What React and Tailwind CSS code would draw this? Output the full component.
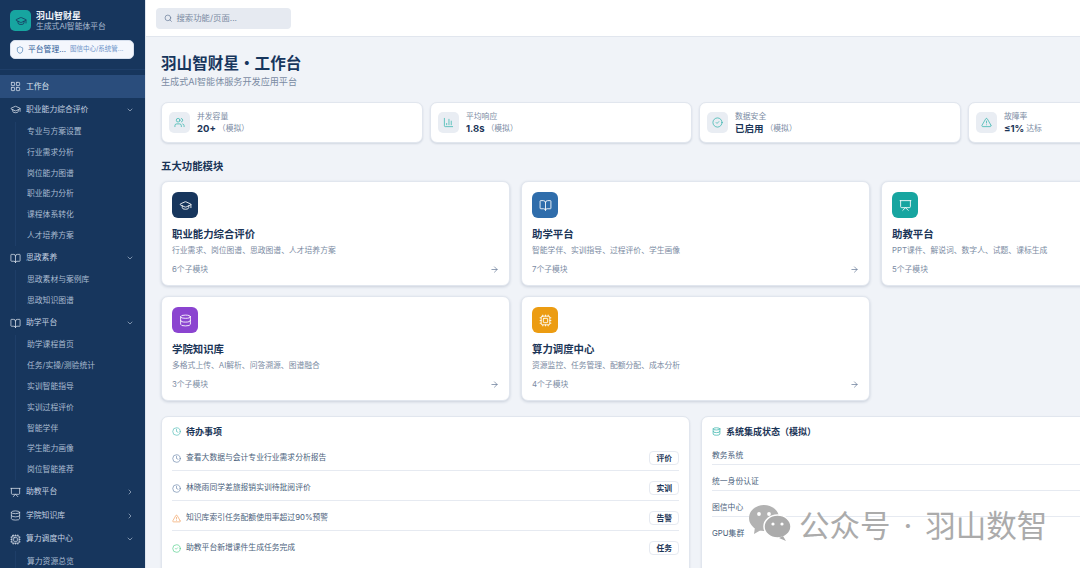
import React from 'react';
import {
  AlertTriangle, ArrowRight, BookOpen, ChevronDown, ChevronRight, CircleCheck, Clock, Cpu, Database,
  GraduationCap, LayoutGrid, Presentation, Search, Shield, Users, ChartColumn,
} from 'lucide-react';

const nav = [
  { label: '职业能力综合评价', icon: GraduationCap, open: true, items: ['专业与方案设置', '行业需求分析', '岗位能力图谱', '职业能力分析', '课程体系转化', '人才培养方案'] },
  { label: '思政素养', icon: BookOpen, open: true, items: ['思政素材与案例库', '思政知识图谱'] },
  { label: '助学平台', icon: BookOpen, open: true, items: ['助学课程首页', '任务/实操/测验统计', '实训智能指导', '实训过程评价', '智能学伴', '学生能力画像', '岗位智能推荐'] },
  { label: '助教平台', icon: Presentation },
  { label: '学院知识库', icon: Database },
  { label: '算力调度中心', icon: Cpu, open: true, items: ['算力资源总览'] },
];

const stats = [
  { label: '并发容量', value: '20+', note: '（模拟）', icon: Users },
  { label: '平均响应', value: '1.8s', note: '（模拟）', icon: ChartColumn },
  { label: '数据安全', value: '已启用', note: '（模拟）', icon: CircleCheck },
  { label: '故障率', value: '≤1%', note: '达标', icon: AlertTriangle },
];

const modules = [
  { title: '职业能力综合评价', desc: '行业需求、岗位图谱、思政图谱、人才培养方案', count: '6个子模块', icon: GraduationCap, color: 'bg-[#17365d]' },
  { title: '助学平台', desc: '智能学伴、实训指导、过程评价、学生画像', count: '7个子模块', icon: BookOpen, color: 'bg-[#2f6dab]' },
  { title: '助教平台', desc: 'PPT课件、解说词、数字人、试题、课标生成', count: '5个子模块', icon: Presentation, color: 'bg-[#17a5a0]' },
  { title: '学院知识库', desc: '多格式上传、AI解析、问答溯源、图谱融合', count: '3个子模块', icon: Database, color: 'bg-[#8b44d0]' },
  { title: '算力调度中心', desc: '资源监控、任务管理、配额分配、成本分析', count: '4个子模块', icon: Cpu, color: 'bg-[#ec9c12]' },
];

const todos = [
  { text: '查看大数据与会计专业行业需求分析报告', tag: '评价', icon: Clock, color: 'text-[#5d7aa3]' },
  { text: '林晓雨同学差旅报销实训待批阅评价', tag: '实训', icon: Clock, color: 'text-[#5d7aa3]' },
  { text: '知识库索引任务配额使用率超过90%预警', tag: '告警', icon: AlertTriangle, color: 'text-[#f0934a]' },
  { text: '助教平台新增课件生成任务完成', tag: '任务', icon: CircleCheck, color: 'text-[#3fc97f]' },
];

const systems = ['教务系统', '统一身份认证', '图信中心', 'GPU集群'];

function WeChatMark() {
  return (
    <svg width="42" height="36" viewBox="0 0 42 36" className="shrink-0">
      <ellipse cx="15" cy="13" rx="15" ry="13" fill="#b2b2b2" />
      <path d="M6 22 L5 29 L12 25 Z" fill="#b2b2b2" />
      <ellipse cx="28.5" cy="21.5" rx="13.5" ry="11.5" fill="#ababab" stroke="#fff" strokeWidth="1.5" />
      <path d="M34 31 L37 36 L30 33 Z" fill="#ababab" />
      <circle cx="10" cy="9" r="1.9" fill="#fff" />
      <circle cx="20" cy="9" r="1.9" fill="#fff" />
      <circle cx="24" cy="19" r="1.6" fill="#fff" />
      <circle cx="33" cy="19" r="1.6" fill="#fff" />
    </svg>
  );
}

function NavGroup({ group }) {
  const Icon = group.icon;
  const Chevron = group.open ? ChevronDown : ChevronRight;
  return (
    <div>
      <div className="flex h-[23.5px] items-center pl-[10px] pr-[11px] text-[#c3d0e0]">
        <Icon size={11} strokeWidth={1.6} className="shrink-0 text-[#dfe7f0]" />
        <span className="ml-[5px] flex-1 text-[7.8px]">{group.label}</span>
        <Chevron size={8} strokeWidth={1.8} />
      </div>
      {group.open && (
        <div className="ml-[15px] border-l border-[#1e3e68]">
          {group.items.map(item => (
            <div key={item} className="flex h-[20.8px] items-center pl-[11px] text-[7.8px] text-[#a9bbd0]">{item}</div>
          ))}
        </div>
      )}
    </div>
  );
}

function StatCard({ stat }) {
  const Icon = stat.icon;
  return (
    <div className="flex h-[41px] w-[261.5px] shrink-0 items-center gap-[7px] rounded-[7px] border border-[#e1e6ee] bg-white pl-[7px] shadow-[0_1px_2px_rgba(30,50,90,0.14)]">
      <div className="flex h-[21px] w-[21px] items-center justify-center rounded-[5px] bg-[#e9edf3]">
        <Icon size={11} strokeWidth={1.5} className="text-[#26b0a8]" />
      </div>
      <div>
        <div className="text-[7.8px] leading-[12px] text-[#7b8ba3]">{stat.label}</div>
        <div className="flex items-center text-[7.8px] leading-[13px] text-[#7b8ba3]">
          <span className="mr-[2px] text-[9.5px] font-bold text-[#1b3557]">{stat.value}</span>
          {stat.note}
        </div>
      </div>
    </div>
  );
}

function ModuleCard({ mod }) {
  const Icon = mod.icon;
  return (
    <div className="flex h-[105px] flex-col rounded-[7px] border border-[#e1e6ee] bg-white px-[10px] pt-[10px] shadow-[0_1px_3px_rgba(30,50,90,0.18)]">
      <div className={`flex h-[26px] w-[26px] items-center justify-center rounded-[6px] ${mod.color}`}>
        <Icon size={13} strokeWidth={1.6} className="text-white" />
      </div>
      <div className="mt-[9px] text-[10.4px] font-bold leading-[15px] text-[#1b3557]">{mod.title}</div>
      <div className="mt-[2px] text-[7.8px] leading-[12px] text-[#7b8ba3]">{mod.desc}</div>
      <div className="mt-[7px] flex items-center justify-between text-[7.8px] leading-[12px] text-[#7b8ba3]">
        <span>{mod.count}</span>
        <ArrowRight size={9} strokeWidth={1.8} className="text-[#5d7291]" />
      </div>
    </div>
  );
}

export default function App() {
  return (
    <div className="relative flex h-[568px] w-[1080px] overflow-hidden bg-[#f0f3f8] font-['Inter','Noto_Sans_CJK_SC',sans-serif]">
      <aside className="w-[146px] shrink-0 overflow-hidden border-r border-[#dfe5ed] bg-[#17365d]">
        <div className="border-b border-[#1e3e68] pb-[10px] pl-[10px] pr-[11px] pt-[10px]">
          <div className="flex items-center gap-[5px]">
            <div className="flex h-[21px] w-[21px] items-center justify-center rounded-[5px] bg-[#17a5a0]">
              <GraduationCap size={12} strokeWidth={1.6} className="text-[#17365d]" />
            </div>
            <div>
              <div className="text-[9px] font-bold leading-[11px] text-[#eef3f8]">羽山智财星</div>
              <div className="text-[7.8px] leading-[10px] text-[#a9bbd0]">生成式AI智能体平台</div>
            </div>
          </div>
          <div className="mt-[9px] flex h-[19px] items-center rounded-[5px] border border-[#d7e0ee] bg-[#f4f7fd] pl-[5px]">
            <Shield size={8} strokeWidth={1.8} className="shrink-0 text-[#2f6dab]" />
            <span className="ml-[4px] whitespace-nowrap text-[7.8px] text-[#2a5a96]">平台管理...</span>
            <span className="ml-[4px] whitespace-nowrap text-[6.5px] text-[#6d93c9]">图信中心/系统管...</span>
          </div>
        </div>
        <div className="mt-[5px] flex h-[23px] items-center bg-[#2a4d7c] pl-[10px] text-[#dfe7f0]">
          <LayoutGrid size={11} strokeWidth={1.6} />
          <span className="ml-[5px] text-[7.8px]">工作台</span>
        </div>
        {nav.map(group => <NavGroup key={group.label} group={group} />)}
      </aside>

      <div className="flex min-w-0 flex-1 flex-col">
        <header className="flex h-[37px] shrink-0 items-center border-b border-[#e1e6ee] bg-white pl-[10px]">
          <div className="flex h-[21px] w-[135px] items-center rounded-[4px] bg-[#e6eaf1] pl-[8px] text-[#7b8ba3]">
            <Search size={8.5} strokeWidth={1.8} className="text-[#5d7291]" />
            <span className="ml-[4px] text-[8.4px]">搜索功能/页面...</span>
          </div>
        </header>

        <main className="flex-1 overflow-hidden pl-[15px] pt-[16px]">
          <h1 className="text-[15.6px] font-bold leading-[22px] text-[#17365d]">羽山智财星・工作台</h1>
          <p className="text-[9.1px] leading-[13px] text-[#7b8ba3]">生成式AI智能体服务开发应用平台</p>

          <div className="mt-[14px] flex gap-[7.5px]">
            {stats.map(s => <StatCard key={s.label} stat={s} />)}
          </div>

          <h2 className="mt-[16px] text-[10.4px] font-bold leading-[15px] text-[#1b3557]">五大功能模块</h2>

          <div className="mt-[7px] grid w-[1069px] grid-cols-[repeat(3,349px)] gap-x-[11px] gap-y-[10px]">
            {modules.map(m => <ModuleCard key={m.title} mod={m} />)}
          </div>

          <div className="mt-[15px] flex gap-[11px]">
            <section className="h-[170px] w-[529px] shrink-0 rounded-[7px] border border-[#e1e6ee] bg-white px-[10px] pt-[8px] shadow-[0_1px_2px_rgba(30,50,90,0.12)]">
              <div className="flex items-center gap-[5px]">
                <Clock size={9} strokeWidth={1.6} className="text-[#3eb5ae]" />
                <span className="text-[9px] font-bold leading-[13px] text-[#1b3557]">待办事项</span>
              </div>
              <div className="mt-[3px]">
                {todos.map((t, i) => {
                  const Icon = t.icon;
                  return (
                    <div key={t.text} className={`flex h-[30px] items-center border-b pt-[5px] ${i < todos.length - 1 ? 'border-[#e6eaf1]' : 'border-transparent'}`}>
                      <Icon size={9} strokeWidth={1.6} className={t.color} />
                      <span className="ml-[5px] flex-1 text-[7.8px] text-[#4b5f7c]">{t.text}</span>
                      <span className="rounded-[4px] border border-[#e6eaf1] px-[6px] text-[7.8px] font-bold leading-[12px] text-[#1b3557]">{t.tag}</span>
                    </div>
                  );
                })}
              </div>
            </section>
            <section className="h-[170px] w-[529px] shrink-0 rounded-[7px] border border-[#e1e6ee] bg-white px-[10px] pt-[8px] shadow-[0_1px_2px_rgba(30,50,90,0.12)]">
              <div className="flex items-center gap-[5px]">
                <Database size={9} strokeWidth={2} className="text-[#3eb5ae]" />
                <span className="text-[9px] font-bold leading-[13px] text-[#1b3557]">系统集成状态（模拟）</span>
              </div>
              <div className="mt-[1px]">
                {systems.map((s, i) => (
                  <div key={s} className={`flex h-[26px] items-center border-b pt-[9px] text-[7.8px] text-[#4b5f7c] ${i < systems.length - 1 ? 'border-[#e6eaf1]' : 'border-transparent'}`}>{s}</div>
                ))}
              </div>
            </section>
          </div>
        </main>
      </div>

      <div className="absolute left-[749px] top-[505px] flex items-start">
        <WeChatMark />
        <div className="ml-[8px] mt-[3px] flex items-center text-[30.5px] leading-[36px] text-[#ababab]">
          <span>公众号</span>
          <span className="mx-[13px]">·</span>
          <span>羽山数智</span>
        </div>
      </div>
    </div>
  );
}
